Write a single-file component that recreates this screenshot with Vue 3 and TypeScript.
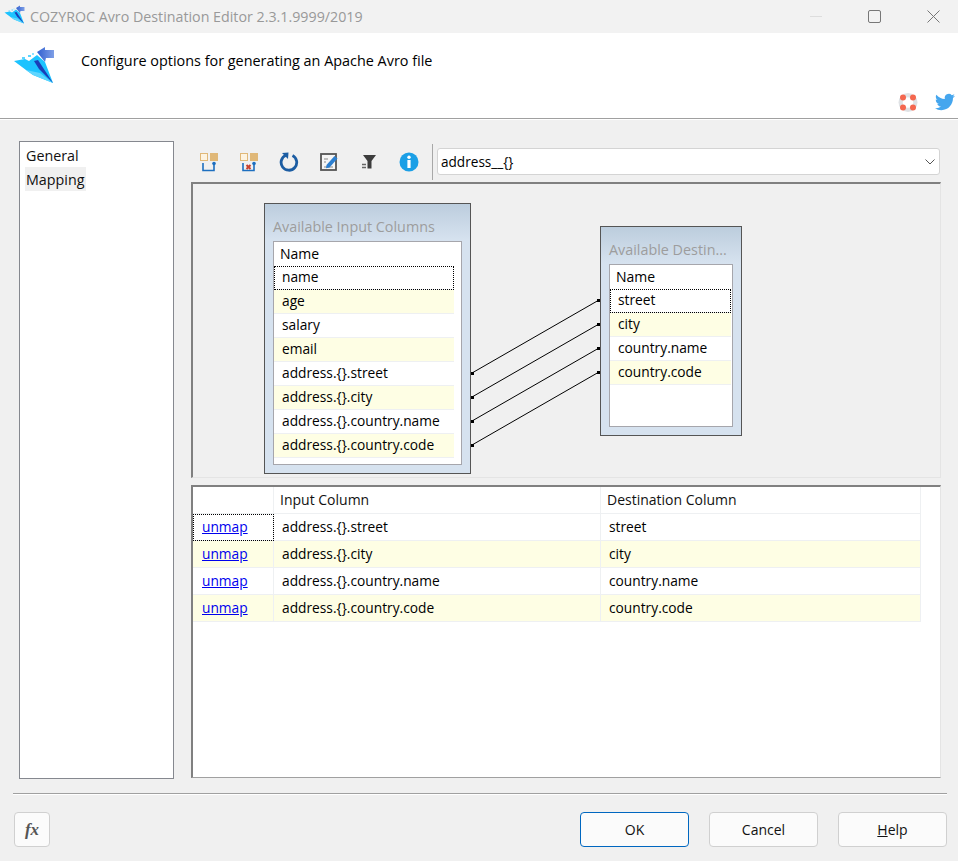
<script setup lang="ts">
interface Mapping {
	input: string
	dest: string
}

const inputColumns: string[] = [
	'name',
	'age',
	'salary',
	'email',
	'address.{}.street',
	'address.{}.city',
	'address.{}.country.name',
	'address.{}.country.code',
]
const destColumns: string[] = ['street', 'city', 'country.name', 'country.code']

const mappings: Mapping[] = [
	{ input: 'address.{}.street', dest: 'street' },
	{ input: 'address.{}.city', dest: 'city' },
	{ input: 'address.{}.country.name', dest: 'country.name' },
	{ input: 'address.{}.country.code', dest: 'country.code' },
]

// link end points, relative to the designer canvas
const links = [0, 1, 2, 3].map((i) => ({
	x1: 279,
	y1: 189 + i * 24,
	x2: 406,
	y2: 116 + i * 24,
}))
</script>

<template>
	<div class="dialog">
		<svg class="defs" width="0" height="0">
			<defs>
				<linearGradient id="arrow-fill" x1="0" y1="0" x2="1" y2="0">
					<stop offset="0" stop-color="#2f5fd0" />
					<stop offset="1" stop-color="#7f9fe6" />
				</linearGradient>
			</defs>
			<symbol id="plane" viewBox="0 0 44 42">
				<polygon points="1,15 12,13 16,15 24,9 32,16 40,37 20,29 13,24" fill="#1cc3ff" />
				<polygon points="13,24 27,27 40,37 20,29" fill="#5fd6ff" />
				<polygon points="21,15 25,14 40,37 26,23" fill="#1a3fb8" />
				<polygon points="24,6 32,1 32,4 41,4 41,12 33,12 32,16" fill="url(#arrow-fill)" />
				<rect x="15" y="9" width="3" height="2" fill="#5cd4ff" />
				<rect x="9" y="11" width="3" height="2" fill="#5cd4ff" />
				<rect x="19" y="7" width="2" height="2" fill="#8fe2ff" />
			</symbol>
		</svg>

		<div class="titlebar">
			<svg class="title-logo" width="22" height="21"><use href="#plane" /></svg>
			<span class="title-text">COZYROC Avro Destination Editor 2.3.1.9999/2019</span>
			<div class="win-controls">
				<span class="win-btn"><i class="win-min"></i></span>
				<span class="win-btn"><i class="win-max"></i></span>
				<span class="win-btn">
					<svg width="13" height="13" viewBox="0 0 13 13"><path d="M.5.5l12 12M12.5.5l-12 12" stroke="#777" fill="none" /></svg>
				</span>
			</div>
		</div>

		<header class="banner">
			<svg class="banner-logo" width="44" height="42"><use href="#plane" /></svg>
			<span class="banner-text">Configure options for generating an Apache Avro file</span>
			<div class="banner-icons">
				<svg width="20" height="20" viewBox="0 0 20 20">
					<circle cx="10" cy="10.5" r="9.5" fill="#dfe2e5" />
					<circle cx="10" cy="10.5" r="5.2" fill="#fff" />
					<circle cx="5" cy="5.5" r="3" fill="#f4674f" />
					<circle cx="15" cy="5.5" r="3" fill="#f4674f" />
					<circle cx="5" cy="15.5" r="3" fill="#f4674f" />
					<circle cx="15" cy="15.5" r="3" fill="#f4674f" />
				</svg>
				<svg width="20" height="20" viewBox="0 0 24 24">
					<path fill="#45a6ee" d="M23.95 4.57a10 10 0 0 1-2.82.77 4.96 4.96 0 0 0 2.16-2.72c-.95.55-2 .95-3.12 1.18a4.92 4.92 0 0 0-8.38 4.48A13.98 13.98 0 0 1 1.64 3.16a4.82 4.82 0 0 0-.67 2.48c0 1.71.87 3.21 2.19 4.1a4.9 4.9 0 0 1-2.23-.62v.06a4.92 4.92 0 0 0 3.95 4.83 5 5 0 0 1-2.21.08 4.94 4.94 0 0 0 4.6 3.42A9.87 9.87 0 0 1 0 19.54a14 14 0 0 0 7.56 2.21c9.05 0 14-7.5 14-13.98 0-.21 0-.42-.02-.63a9.94 9.94 0 0 0 2.46-2.55z" />
				</svg>
			</div>
		</header>

		<main class="content">
			<nav class="side-list">
				<div class="side-item">General</div>
				<div class="side-item side-item--active">Mapping</div>
			</nav>

			<section class="right">
				<div class="toolbar">
					<button class="tool">
						<svg width="20" height="20" viewBox="0 0 20 20">
							<rect x="1.5" y="1.5" width="7" height="7" fill="#fdf3e0" stroke="#e0b878" />
							<rect x="11" y="1" width="8" height="8" fill="#e0b878" />
							<path d="M4 11v7.5h11V12" fill="none" stroke="#1d6fc0" stroke-width="1.6" />
							<circle cx="15" cy="11.5" r="1.8" fill="#1d6fc0" />
						</svg>
					</button>
					<button class="tool">
						<svg width="20" height="20" viewBox="0 0 20 20">
							<rect x="1.5" y="1.5" width="7" height="7" fill="#fdf3e0" stroke="#e0b878" />
							<rect x="11" y="1" width="8" height="8" fill="#e0b878" />
							<path d="M4 11v7.5h11V12" fill="none" stroke="#1d6fc0" stroke-width="1.6" />
							<circle cx="15" cy="11.5" r="1.8" fill="#1d6fc0" />
							<path d="M7.5 13l4 4M11.5 13l-4 4" stroke="#c8402e" stroke-width="2" />
						</svg>
					</button>
					<button class="tool">
						<svg width="20" height="20" viewBox="0 0 20 20">
							<path d="M7 3.2a7.8 7.8 0 1 0 6.5.3" fill="none" stroke="#1c5da3" stroke-width="2.8" />
							<polygon points="3,1 9.5,0.5 9,7" fill="#1c5da3" />
						</svg>
					</button>
					<button class="tool">
						<svg width="20" height="20" viewBox="0 0 20 20">
							<rect x="2" y="2" width="15" height="16" fill="#f6f6f6" stroke="#555" stroke-width="1.8" />
							<path d="M5 7h4M5 10h2M5 15h9" stroke="#888" />
							<path d="M7.5 13l8-9 3 2.5-8 9-3.5.8z" fill="#2c7fd0" />
						</svg>
					</button>
					<button class="tool">
						<svg width="16" height="16" viewBox="0 0 16 16">
							<polygon points="2,1 15,1 10.5,7 10.5,14.5 6.5,14.5 6.5,7" fill="#3d3d3d" />
							<path d="M1 10.5h4M1 13.5h4" stroke="#666" stroke-width="1.3" />
						</svg>
					</button>
					<button class="tool">
						<svg width="20" height="20" viewBox="0 0 20 20">
							<circle cx="10" cy="10" r="9.5" fill="#1b9fe6" />
							<circle cx="10" cy="5.2" r="1.7" fill="#fff" />
							<rect x="8.4" y="8" width="3.2" height="8" fill="#fff" />
						</svg>
					</button>
					<span class="tool-divider"></span>
					<div class="combo">
						<span>address__{}</span>
						<svg width="10" height="6" viewBox="0 0 10 6"><path d="M.5.5L5 5 9.5.5" fill="none" stroke="#555" /></svg>
					</div>
				</div>

				<div class="designer">
					<div class="table-win table-win--input">
						<div class="table-title">Available Input Columns</div>
						<div class="table-list">
							<div class="table-head">Name</div>
							<div
								v-for="(col, i) in inputColumns"
								:key="col"
								class="table-row"
								:class="{ 'is-odd': i % 2 === 1, 'is-focus': i === 0 }"
							>{{ col }}</div>
						</div>
					</div>

					<svg class="links" width="748" height="294">
						<g v-for="(l, i) in links" :key="i">
							<line :x1="l.x1" :y1="l.y1" :x2="l.x2" :y2="l.y2" stroke="#000" />
							<rect :x="l.x1 - 1" :y="l.y1 - 1" width="3" height="3" fill="#000" />
							<rect :x="l.x2 - 2" :y="l.y2 - 1" width="3" height="3" fill="#000" />
						</g>
					</svg>

					<div class="table-win table-win--dest">
						<div class="table-title">Available Destin...</div>
						<div class="table-list">
							<div class="table-head">Name</div>
							<div
								v-for="(col, i) in destColumns"
								:key="col"
								class="table-row"
								:class="{ 'is-odd': i % 2 === 1, 'is-focus': i === 0 }"
							>{{ col }}</div>
						</div>
					</div>
				</div>

				<div class="grid-panel">
					<div class="grid-row grid-row--head">
						<div class="cell"></div>
						<div class="cell cell--head">Input Column</div>
						<div class="cell cell--head">Destination Column</div>
					</div>
					<div
						v-for="(m, i) in mappings"
						:key="m.dest"
						class="grid-row"
						:class="{ 'is-odd': i % 2 === 1 }"
					>
						<div class="cell cell--link" :class="{ 'is-focus': i === 0 }"><a href="#">unmap</a></div>
						<div class="cell">{{ m.input }}</div>
						<div class="cell">{{ m.dest }}</div>
					</div>
				</div>
			</section>
		</main>

		<div class="separator"></div>

		<footer class="footer">
			<button class="btn btn--fx">fx</button>
			<span class="footer-gap"></span>
			<button class="btn btn--primary">OK</button>
			<button class="btn">Cancel</button>
			<button class="btn"><u>H</u>elp</button>
		</footer>
	</div>
</template>

<style scoped>
.defs
{
	position: absolute;
}

.dialog
{
	width: 958px;
	height: 861px;
	overflow: hidden;
	background: #f0f0f0;
	font-family: "Open Sans", "Noto Sans", sans-serif;
	font-size: 14px;
	color: #000;
	display: flex;
	flex-direction: column;
}

.titlebar
{
	height: 33px;
	flex: none;
	display: flex;
	align-items: center;
	padding-left: 4px;
	background: #f2f2f2;
}

.title-logo
{
	flex: none;
	margin-right: 4px;
	margin-top: -3px;
}

.title-text
{
	color: #999;
	font-size: 14.25px;
}

.win-controls
{
	margin-left: auto;
	margin-right: -5px;
	display: flex;
}

.win-btn
{
	width: 59px;
	height: 30px;
	display: flex;
	align-items: center;
	justify-content: center;
}

.win-min
{
	width: 12px;
	height: 1px;
	background: #ddd;
}

.win-max
{
	width: 11px;
	height: 11px;
	border: 1px solid #777;
	border-radius: 2px;
}

.banner
{
	position: relative;
	height: 85px;
	flex: none;
	display: flex;
	align-items: flex-start;
	background: #fff;
	border-bottom: 1px solid #a0a0a0;
	box-shadow: 0 1px 0 #fff;
}

.banner-logo
{
	flex: none;
	margin: 13px 0 0 13px;
}

.banner-text
{
	margin: 18px 0 0 24px;
	font-size: 14.4px;
}

.banner-icons
{
	position: absolute;
	right: 3px;
	top: 59px;
	display: flex;
	gap: 17px;
}

.content
{
	display: flex;
	gap: 17px;
	padding: 22px 17px 0 19px;
	height: 638px;
	flex: none;
}

.side-list
{
	width: 155px;
	height: 638px;
	box-sizing: border-box;
	flex: none;
	background: #fff;
	border: 1px solid #85888f;
	padding: 1px 5px;
}

.side-item
{
	width: max-content;
	height: 24px;
	line-height: 26px;
	padding: 0 2px 0 1px;
	font-size: 14.3px;
	color: #111;
}

.side-item--active
{
	background: #f0f0f0;
}

.right
{
	width: 750px;
	flex: none;
	display: flex;
	flex-direction: column;
}

.toolbar
{
	height: 41px;
	flex: none;
	display: flex;
	align-items: center;
	margin-left: -2px;
}

.tool
{
	width: 40px;
	height: 30px;
	padding: 0;
	border: 0;
	background: none;
	display: flex;
	align-items: center;
	justify-content: center;
}

.tool-divider
{
	width: 1px;
	height: 36px;
	background: #a8a8a8;
	margin: 0 4px 0 3px;
}

.combo
{
	width: 503px;
	height: 27px;
	box-sizing: border-box;
	display: flex;
	align-items: center;
	justify-content: space-between;
	padding: 0 4px 0 3px;
	font-size: 13.6px;
	background: #fff;
	border: 1px solid #d4d4d4;
	border-radius: 3px;
}

.designer
{
	position: relative;
	height: 296px;
	flex: none;
	box-sizing: border-box;
	border-top: 2px solid #808080;
	border-left: 2px solid #808080;
	border-right: 1px solid #e4e4e4;
	border-bottom: 1px solid #e4e4e4;
	background: #f0f0f0;
}

.links
{
	position: absolute;
	left: 0;
	top: 0;
}

.table-win
{
	position: absolute;
	box-sizing: border-box;
	border: 1px solid #555;
	background: linear-gradient(#bccddd 0, #d6e2ef 36px, #d6e2ef 100%);
	padding: 37px 8px 8px 8px;
}

.table-win--input
{
	left: 71px;
	top: 19px;
	width: 207px;
	height: 271px;
}

.table-win--dest
{
	left: 407px;
	top: 42px;
	width: 142px;
	height: 210px;
}

.table-title
{
	position: absolute;
	left: 8px;
	top: 13px;
	font-size: 14.35px;
	color: #9d9d9d;
	white-space: nowrap;
}

.table-list
{
	height: 100%;
	box-sizing: border-box;
	background: #fff;
	border: 1px solid #a6a6ac;
	padding-right: 7px;
}

.table-win--dest .table-list
{
	padding-right: 1px;
}

.table-head
{
	height: 24px;
	line-height: 24px;
	padding-left: 6px;
}

.table-row
{
	height: 24px;
	line-height: 21px;
	box-sizing: border-box;
	padding-left: 8px;
	font-size: 13.75px;
	border-bottom: 1px solid #eef0f2;
}

.is-odd
{
	background: #fefee4;
}

.is-focus
{
	outline: 1px dotted #000;
	outline-offset: -1px;
}

.grid-panel
{
	margin-top: 7px;
	height: 293px;
	flex: none;
	box-sizing: border-box;
	background: #fff;
	border-top: 2px solid #808080;
	border-left: 2px solid #808080;
	border-right: 1px solid #e4e4e4;
	border-bottom: 1px solid #a0a0a0;
}

.grid-row
{
	width: 728px;
	height: 27px;
	display: grid;
	grid-template-columns: 81px 327px 320px;
}

.grid-row--head
{
	height: 27px;
}

.cell
{
	box-sizing: border-box;
	line-height: 26px;
	padding-left: 8px;
	font-size: 13.75px;
	border-right: 1px solid #eef0f2;
	border-bottom: 1px solid #eef0f2;
	white-space: nowrap;
}

.cell--head
{
	padding-left: 6px;
	font-size: 14px;
	color: #111;
}

.cell--link
{
	padding-left: 9px;
}

.cell--link a
{
	color: #0000ee;
}

.separator
{
	margin: 14px 11px 0 13px;
	height: 1px;
	flex: none;
	background: #a0a0a0;
	box-shadow: 0 1px 0 #fff;
}

.footer
{
	display: flex;
	gap: 20px;
	padding: 18px 11px 0 14px;
}

.footer-gap
{
	flex: 1;
}

.btn
{
	width: 109px;
	height: 35px;
	padding: 0;
	font: inherit;
	color: #111;
	background: #fbfbfb;
	border: 1px solid #d0d0d0;
	border-radius: 4px;
}

.btn--primary
{
	border: 1px solid #0067c0;
}

.btn--fx
{
	width: 36px;
	font-family: "Liberation Serif", serif;
	font-style: italic;
	font-weight: bold;
	font-size: 17px;
	color: #555;
}
</style>
